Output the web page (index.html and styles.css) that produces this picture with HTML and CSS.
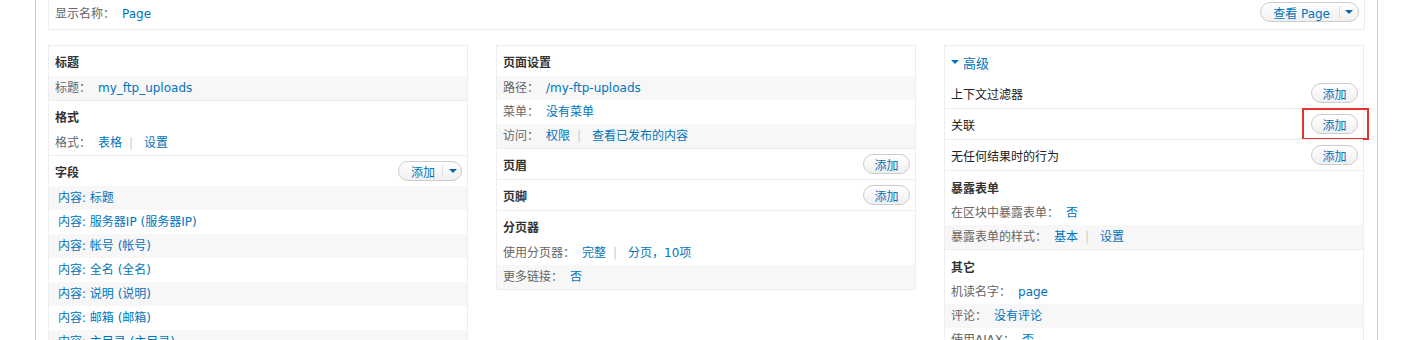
FILE: index.html
```html
<!DOCTYPE html>
<html lang="zh-CN">
<head>
    <meta charset="UTF-8">
    <meta name="viewport" content="width=device-width, initial-scale=1.0">
    <title>Views - Page</title>
    <link rel="stylesheet" href="styles.css">
</head>
<body>
    <div class="page">
        <div class="display-bar">
            <div><span class="label">显示名称：</span><a href="#">Page</a></div>
            <span class="btn-split btn-view">
                <span class="main">查看 Page</span>
                <span class="drop"><span class="caret"></span></span>
            </span>
        </div>

        <div class="columns">
            <!-- first column -->
            <div class="column">
                <div class="bucket">
                    <div class="bucket-title">标题</div>
                    <div class="setting odd"><span class="label">标题：</span><a href="#">my_ftp_uploads</a></div>
                </div>
                <div class="bucket">
                    <div class="bucket-title">格式</div>
                    <div class="setting"><span class="label">格式：</span><a href="#">表格</a><span class="sep">|</span><a href="#">设置</a></div>
                </div>
                <div class="bucket">
                    <div class="bucket-title">字段
                        <span class="btn-split">
                            <span class="main">添加</span>
                            <span class="drop"><span class="caret"></span></span>
                        </span>
                    </div>
                    <div class="setting field odd"><a href="#">内容: 标题</a></div>
                    <div class="setting field"><a href="#">内容: 服务器IP (服务器IP)</a></div>
                    <div class="setting field odd"><a href="#">内容: 帐号 (帐号)</a></div>
                    <div class="setting field"><a href="#">内容: 全名 (全名)</a></div>
                    <div class="setting field odd"><a href="#">内容: 说明 (说明)</a></div>
                    <div class="setting field"><a href="#">内容: 邮箱 (邮箱)</a></div>
                    <div class="setting field odd"><a href="#">内容: 主目录 (主目录)</a></div>
                </div>
            </div>

            <!-- second column -->
            <div class="column">
                <div class="bucket">
                    <div class="bucket-title">页面设置</div>
                    <div class="setting odd"><span class="label">路径：</span><a href="#">/my-ftp-uploads</a></div>
                    <div class="setting"><span class="label">菜单：</span><a href="#">没有菜单</a></div>
                    <div class="setting odd"><span class="label">访问：</span><a href="#">权限</a><span class="sep">|</span><a href="#">查看已发布的内容</a></div>
                </div>
                <div class="bucket">
                    <div class="bucket-title">页眉 <span class="btn">添加</span></div>
                </div>
                <div class="bucket">
                    <div class="bucket-title">页脚 <span class="btn">添加</span></div>
                </div>
                <div class="bucket">
                    <div class="bucket-title">分页器</div>
                    <div class="setting"><span class="label">使用分页器：</span><a href="#">完整</a><span class="sep">|</span><a href="#">分页，10项</a></div>
                    <div class="setting odd"><span class="label">更多链接：</span><a href="#">否</a></div>
                </div>
            </div>

            <!-- third column -->
            <div class="column">
                <div class="advanced"><span class="caret"></span>高级</div>
                <div class="bucket">
                    <div class="bucket-title plain">上下文过滤器 <span class="btn">添加</span></div>
                </div>
                <div class="bucket">
                    <div class="bucket-title plain">关联 <span class="btn">添加</span></div>
                    <div class="highlight"></div>
                </div>
                <div class="bucket">
                    <div class="bucket-title plain">无任何结果时的行为 <span class="btn">添加</span></div>
                </div>
                <div class="bucket">
                    <div class="bucket-title lower">暴露表单</div>
                    <div class="setting"><span class="label">在区块中暴露表单：</span><a href="#">否</a></div>
                    <div class="setting odd"><span class="label">暴露表单的样式：</span><a href="#">基本</a><span class="sep">|</span><a href="#">设置</a></div>
                </div>
                <div class="bucket">
                    <div class="bucket-title lower">其它</div>
                    <div class="setting"><span class="label">机读名字：</span><a href="#">page</a></div>
                    <div class="setting odd"><span class="label">评论：</span><a href="#">没有评论</a></div>
                    <div class="setting"><span class="label">使用AJAX：</span><a href="#">否</a></div>
                </div>
            </div>
        </div>
    </div>
</body>
</html>
```

FILE: styles.css
```css
body {
    margin: 0;
    font-family: "DejaVu Sans", "Noto Sans CJK SC", sans-serif;
    font-size: 12px;
    color: #333;
    background-color: #fff;
}
a {
    color: #0074bd;
    text-decoration: none;
}
.page {
    margin: 0 41px 0 35px;
    padding: 0 12px;
    min-height: 340px;
    border-left: 1px solid #ccc;
    border-right: 1px solid #ccc;
}
.display-bar {
    display: flex;
    align-items: center;
    justify-content: space-between;
    height: 30px;
    box-sizing: border-box;
    padding: 0 5px 5px 6px;
    border: 1px solid #eee;
    border-top: 0;
}
.label {
    color: #666;
    margin-right: 7px;
}
.columns {
    display: grid;
    grid-template-columns: repeat(3, 420px);
    gap: 28px;
    margin-top: 15px;
    align-items: start;
}
.column {
    border: 1px solid #eee;
}
.bucket {
    position: relative;
}
.bucket + .bucket {
    border-top: 1px solid #eee;
}
.bucket-title {
    display: flex;
    align-items: center;
    justify-content: space-between;
    height: 30px;
    padding: 0 5px 0 6px;
    font-weight: bold;
    color: #333;
}
.bucket-title.plain {
    font-weight: normal;
    color: #222;
}
.bucket-title.lower {
    padding-top: 2px;
    height: 28px;
}
.setting {
    height: 24px;
    line-height: 24px;
    padding: 0 6px;
    color: #666;
    white-space: nowrap;
}
.setting.odd {
    background-color: #f7f7f7;
}
.setting.field {
    padding-left: 9px;
}
.sep {
    color: #ccc;
    margin: 0 11px 0 7px;
}
.btn {
    display: inline-flex;
    align-items: center;
    justify-content: center;
    width: 47px;
    height: 20px;
    box-sizing: border-box;
    border: 1px solid #ccc;
    border-radius: 10px;
    background: linear-gradient(#fff, #f0f0f0);
    color: #0074bd;
    font-weight: normal;
}
.btn-split {
    display: inline-flex;
    align-items: center;
    height: 20px;
    box-sizing: border-box;
    border: 1px solid #ccc;
    border-radius: 10px;
    background: linear-gradient(#fff, #f0f0f0);
    color: #0074bd;
    font-weight: normal;
}
.btn-split .main {
    padding: 0 7px 0 12px;
}
.btn-split .drop {
    display: flex;
    align-items: center;
    height: 12px;
    padding: 0 4px 0 6px;
    border-left: 1px solid #ddd;
}
.btn-view .main {
    padding-right: 9px;
}
.btn-view .drop {
    padding-right: 5px;
    padding-left: 5px;
}
.caret {
    width: 0;
    height: 0;
    border-left: 4px solid transparent;
    border-right: 4px solid transparent;
    border-top: 4px solid #0a67a3;
}
.advanced {
    display: flex;
    align-items: center;
    height: 32px;
    padding-left: 6px;
    font-size: 13px;
    color: #0074bd;
}
.advanced .caret {
    border-top-color: #0074bd;
    margin-right: 4px;
}
.highlight {
    position: absolute;
    top: -1px;
    right: -6px;
    width: 67px;
    height: 32px;
    box-sizing: border-box;
    border: 2px solid #e8312f;
}
```
